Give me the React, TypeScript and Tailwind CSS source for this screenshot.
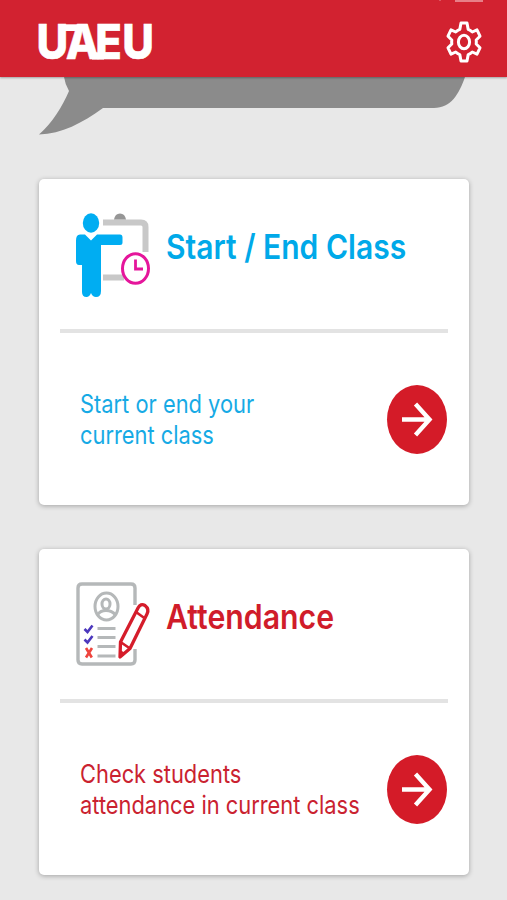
import type { ReactNode } from 'react';

function Logo() {
  return (
    <svg viewBox="0 0 126 77" className="h-[77px] w-[126px]" fill="#fff" role="img" aria-label="UAEU">
      <g transform="scale(0.9 1)">
        <text x="5 37.6 70.4 100.4" y="59.5" fontFamily="Inter, sans-serif" fontWeight="800" fontSize="48.5" stroke="#fff" strokeWidth="0.5">UAEU</text>
      </g>
      {/* bars that join the letters */}
      <rect x="27" y="24.3" width="28.5" height="6.7" />
      <rect x="60" y="52.3" width="12" height="7.2" />
    </svg>
  );
}

function GearIcon() {
  return (
    <svg viewBox="0 0 36 42" className="h-[42px] w-9" fill="none" stroke="#fff" strokeWidth="3" strokeLinejoin="round">
      <path d="M15 2H21L22.2 8.4Q24.5 9.2 26.3 11L31 8.8L34 15.2L30.2 19Q30.5 21 30.2 23L34 26.8L31 33.2L26.3 31Q24.5 32.8 22.2 33.6L21 40H15L13.8 33.6Q11.5 32.8 9.7 31L5 33.2L2 26.8L5.8 23Q5.5 21 5.8 19L2 15.2L5 8.8L9.7 11Q11.5 9.2 13.8 8.4Z" />
      <ellipse cx="18" cy="21" rx="5.6" ry="6.8" />
    </svg>
  );
}

function ClassIcon() {
  return (
    <svg viewBox="0 0 76 86" className="h-[86px] w-[76px]" fill="none">
      <path d="M27 10.5H65Q69.5 10.5 69.5 15V40M27 65.5H48" stroke="#c8c8c8" strokeWidth="6" />
      <path d="M38 7.5Q39 1.5 44 1.5T50 7.5Z" fill="#969696" />
      <ellipse cx="15" cy="11" rx="8.2" ry="9.7" fill="#00adf2" />
      <path
        d="M4 22.5H9L15 28.5L21 22.5H44Q46.5 22.5 46.5 25.5V30.5Q46.5 33 44 33H25V79Q25 85 20 85Q16.5 85 15 81Q13.5 85 10.5 85Q6 85 6 80V53H3Q0 53 0 49V28.5Q0 22.5 4 22.5Z"
        fill="#00adf2"
      />
      <ellipse cx="59.5" cy="56.5" rx="13" ry="14.8" fill="#fff" stroke="#e5169b" strokeWidth="3" />
      <path d="M59.5 47.5V57H67" stroke="#e5169b" strokeWidth="2.8" />
    </svg>
  );
}

function AttendanceIcon() {
  return (
    <svg viewBox="0 0 76 86" className="h-[86px] w-[76px]" fill="none">
      <path d="M59 23V6Q59 2 55 2H6Q2 2 2 6V78Q2 82 6 82H55Q59 82 59 78V67" stroke="#b5b8b9" strokeWidth="3.4" />
      <g stroke="#b5b8b9" strokeWidth="3">
        <ellipse cx="30.5" cy="24.5" rx="11.5" ry="13.5" />
        <ellipse cx="30" cy="22" rx="4" ry="5" />
        <path d="M21.5 33Q24 28.5 30 28.5T39.5 33" />
        <path d="M21.5 46.5H39.5M21.5 55.5H39.5M21.5 64.5H39.5M21.5 74H39.5" />
      </g>
      <path d="M8.5 47L11.5 50L16.5 43.5M8.5 57.5L11.5 60.5L16.5 54" stroke="#4c38bd" strokeWidth="2.6" />
      <path d="M10 66L15.8 75.5M16 66L10 75.5" stroke="#ee443d" strokeWidth="2.6" />
      <path
        d="M44 75L44.5 60L62 26Q64.5 21 69 23.5Q73.5 27 71 32L54 66.5Z"
        fill="#fff"
        stroke="#d51d2b"
        strokeWidth="3.3"
        strokeLinejoin="round"
      />
      <path d="M44.5 60L54 66.5M60 30L69 36.5" stroke="#d51d2b" strokeWidth="2.7" />
      <path d="M44 75L44.3 68L49 71Z" fill="#d51d2b" />
    </svg>
  );
}

function ArrowButton({ label }: { label: string }) {
  return (
    <button aria-label={label} className="h-[69px] w-[60px] shrink-0 rounded-[50%] bg-[#d41b28]">
      <svg viewBox="0 0 60 69" className="h-full w-full" fill="none" stroke="#fff" strokeWidth="4.4">
        <path d="M15 34.5H42.5M28.5 19L42.5 34.5L28.5 50" />
      </svg>
    </button>
  );
}

type CardProps = {
  icon: ReactNode;
  title: string;
  titleClass: string;
  lines: string[];
  textClass: string;
};

function Card({ icon, title, titleClass, lines, textClass }: CardProps) {
  return (
    <section className="h-[326px] w-[430px] rounded-[5px] bg-white px-[21px] shadow-[0_1px_5px_rgba(0,0,0,0.3)]">
      <div className="flex h-[150px] gap-3.5 pt-[33px] pl-[15.5px]">
        {icon}
        <h2 className={`mt-4 origin-left text-[34px] leading-[38px] font-semibold whitespace-nowrap ${titleClass}`}>{title}</h2>
      </div>
      <div className="h-1 w-[388px] bg-[#e3e3e3]" />
      <div className="flex w-[387px] justify-between pt-[52px]">
        <p className={`mt-[3px] ml-[19.5px] w-[290px] origin-left scale-x-[0.857] text-[25.5px] leading-[31px] whitespace-nowrap ${textClass}`}>
          {lines.map((line) => (
            <span key={line} className="block">{line}</span>
          ))}
        </p>
        <ArrowButton label={title} />
      </div>
    </section>
  );
}

export default function App() {
  return (
    <div className="h-[900px] w-[507px] overflow-hidden bg-[#e8e8e8] font-['Inter',sans-serif]">
      <header className="relative flex h-[77px] items-start justify-between bg-[#d22230] pr-[25px] pl-[32px] shadow-[0_1px_2px_rgba(0,0,0,0.3)]">
        <Logo />
        <div className="pt-[21px]">
          <GearIcon />
        </div>
        <div className="absolute top-0 left-[455px] h-[1.5px] w-7 bg-[#e77f88]" />
        <div className="absolute top-0 left-[439px] h-px w-[2px] bg-[#dc5560]" />
      </header>

      {/* speech bubble scrolled under the header */}
      <svg viewBox="0 0 507 102" className="h-[102px] w-[507px]" fill="#8b8b8b">
        <path d="M64 0H465C459 17 451 31 434 31H103C82 46 62 57 39 57.5C53 45 62 30 69 14Q65 7 64 0Z" />
      </svg>

      <main className="flex flex-col items-center gap-[44px] pl-[1px]">
        <Card
          icon={<ClassIcon />}
          title="Start / End Class"
          titleClass="scale-x-[0.883] text-[#00a9e9]"
          lines={['Start or end your', 'current class']}
          textClass="text-[#16aae5]"
        />
        <Card
          icon={<AttendanceIcon />}
          title="Attendance"
          titleClass="scale-x-[0.89] text-[#d01c2a]"
          lines={['Check students', 'attendance in current class']}
          textClass="text-[#ca2230]"
        />
      </main>
    </div>
  );
}
